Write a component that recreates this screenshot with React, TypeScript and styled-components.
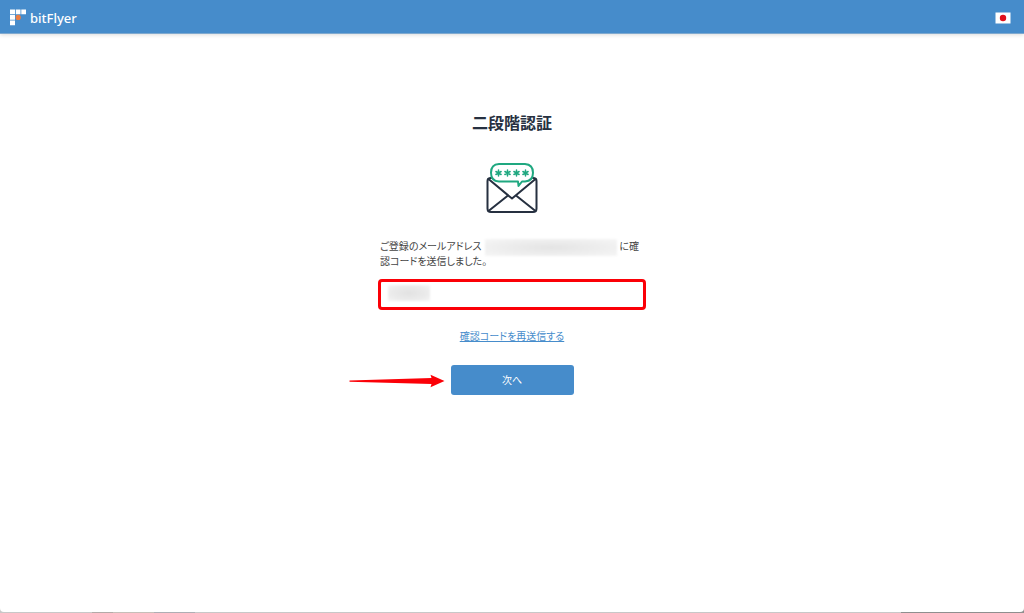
import React from "react";
import styled, { createGlobalStyle } from "styled-components";

const GlobalStyle = createGlobalStyle`
  * { box-sizing: border-box; }
  body {
    margin: 0;
    background: linear-gradient(90deg, #c8c8c8 0 9%, #b3aaa8 9% 11%, #c6bfb9 11% 15%, #aeaeb4 15% 19%, #c8c8c8 19% 88%, #8f8f8f 88%);
    color: #444;
    font-family: "Noto Sans CJK JP", sans-serif;
    font-size: 10px;
    line-height: 15px;
    font-feature-settings: "palt";
  }
`;

const Page = styled.div`
  display: flex;
  flex-direction: column;
  min-height: calc(100vh - 1px);
  background: #fff;
  border-radius: 0 0 4px 4px;
`;

const Header = styled.header`
  display: flex;
  align-items: center;
  justify-content: space-between;
  height: 34px;
  padding: 2px 13px 0 10px;
  background: #468ccb;
  border-bottom: 1px solid #7fa9cf;
  box-shadow: 0 1px 4px rgba(0, 0, 0, 0.14);
`;

const Brand = styled.a`
  display: flex;
  align-items: center;
  gap: 3px;
  color: #fff;
  font: 500 13px/18px "Noto Sans", sans-serif;
  text-decoration: none;
`;

const LanguageButton = styled.button`
  display: flex;
  padding: 0;
  border: 0;
  background: none;
`;

const Main = styled.main`
  display: flex;
  flex-direction: column;
  align-items: center;
  width: 100%;
  max-width: 268px;
  margin: 0 auto;
  padding: 76px 0 40px;
`;

const Title = styled.h1`
  margin: 0 0 29px;
  color: #263040;
  font-size: 16px;
  line-height: 24px;
  font-weight: 700;
  font-feature-settings: normal;
`;

const Form = styled.form`
  display: flex;
  flex-direction: column;
  align-items: center;
  width: 100%;
  margin-top: 24px;
`;

const Message = styled.label`
  width: 100%;
  padding: 0 2px;
`;

const HiddenAddress = styled.span`
  display: inline-block;
  width: 132px;
  height: 17px;
  margin: -4px 2px -4px 4px;
  vertical-align: middle;
  background: radial-gradient(ellipse at center, #e4e4e4 0%, #ededed 50%, #f6f6f6 100%);
  filter: blur(1px);
`;

const CodeField = styled.div`
  display: grid;
  width: 100%;
  margin: 11px 0 18px;
`;

const CodeInput = styled.input`
  grid-area: 1 / 1;
  width: 100%;
  height: 31px;
  padding: 0 10px;
  border: 3px solid #fb0007;
  border-radius: 4px;
  background: #fff;
  font: inherit;
  outline: 0;
`;

const HiddenCode = styled.span`
  grid-area: 1 / 1;
  width: 42px;
  height: 16px;
  margin: 6px 0 0 10px;
  background: radial-gradient(ellipse at center, #e2e2e2 0%, #ebebeb 60%, #f5f5f5 100%);
  filter: blur(1px);
  pointer-events: none;
`;

const ResendLink = styled.a`
  color: #468ccb;
  text-decoration: underline;
  text-underline-offset: 1px;
`;

const Action = styled.div`
  position: relative;
  margin-top: 22px;
`;

const NextButton = styled.button`
  display: block;
  width: 123px;
  height: 30px;
  padding: 0 0 2px;
  border: 0;
  border-radius: 3px;
  background: #468ccb;
  color: #fff;
  font: inherit;
`;

const Pointer = styled.svg`
  position: absolute;
  top: 9px;
  right: calc(100% + 6px);
`;

const Logo = () => (
  <svg width="17" height="17" viewBox="0 0 17 17" fill="#fff" aria-hidden="true">
    <path d="M0 0.5h5v4.7H0zM5.8 0.5h4.7v4.7H5.8zM11.3 0.5H16v4.7h-4.7zM0 6h5v4.8H0zM0 11.6h5v4.7H0z" />
    <circle cx="8.2" cy="8.4" r="2.6" fill="#ee7e40" />
  </svg>
);

const JapanFlag = () => (
  <svg width="16" height="12" viewBox="0 0 16 12" aria-hidden="true">
    <path d="M0.5 0.5h15v11h-15z" fill="#fff" />
    <circle cx="8" cy="6" r="3.2" fill="#e1101b" />
  </svg>
);

const MailIllustration = () => (
  <svg width="52" height="51" viewBox="0 0 52 51" fill="none" aria-hidden="true">
    <g stroke="#263040" strokeWidth="2" strokeLinejoin="round" strokeLinecap="round">
      <path d="M5 15Q1.5 15 1.5 18V45.5Q1.5 49 5 49H47Q50.5 49 50.5 45.5V18Q50.5 15 47 15" />
      <path d="M2.5 16L26 35.5 49.5 16M2.5 48L22 32.5M49.5 48L30 32.5" />
    </g>
    <path d="M13 1H39Q47 1.5 47 9.7T39 18.5H36L32.5 23 32 18.5H13Q5 18 5 9.7T13 1Z" fill="#fff" stroke="#1fa880" strokeWidth="2" strokeLinejoin="round" />
    <g stroke="#1fa880" strokeWidth="1.5" strokeLinecap="round">
      {[12.5, 21.5, 30.5, 39.5].map((x) => (
        <path key={x} d={`M${x} 7v6M${x - 2.6} 8.5l5.2 3M${x - 2.6} 11.5l5.2-3`} />
      ))}
    </g>
  </svg>
);

export default function App() {
  return (
    <>
      <GlobalStyle />
      <Page>
        <Header>
          <Brand href="#">
            <Logo />
            bitFlyer
          </Brand>
          <LanguageButton type="button" aria-label="日本語">
            <JapanFlag />
          </LanguageButton>
        </Header>
        <Main>
          <Title>二段階認証</Title>
          <MailIllustration />
          <Form onSubmit={(event) => event.preventDefault()}>
            <Message htmlFor="code">
              ご登録のメールアドレス
              <HiddenAddress />
              に確認コードを送信しました。
            </Message>
            <CodeField>
              <CodeInput id="code" type="text" inputMode="numeric" autoComplete="one-time-code" />
              <HiddenCode />
            </CodeField>
            <ResendLink href="#">確認コードを再送信する</ResendLink>
            <Action>
              <Pointer width="96" height="14" viewBox="0 0 96 14" fill="#fb0007" aria-hidden="true">
                <path d="M0.5 6.5L82.5 4 81.5 0.8 95.5 7 81.5 13.2 82.5 10 0.5 7.8Z" />
              </Pointer>
              <NextButton type="submit">次へ</NextButton>
            </Action>
          </Form>
        </Main>
      </Page>
    </>
  );
}
